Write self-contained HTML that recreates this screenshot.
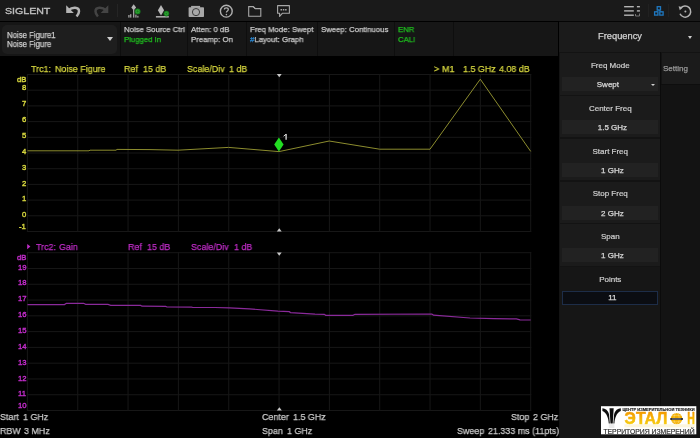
<!DOCTYPE html>
<html><head><meta charset="utf-8">
<style>
*{margin:0;padding:0;box-sizing:border-box}
html,body{width:700px;height:438px;overflow:hidden;background:#000;font-family:"Liberation Sans",sans-serif}
.t{will-change:transform}
.a{position:absolute}
.t{position:absolute;white-space:pre;line-height:1;-webkit-text-stroke:0.25px currentColor}
#tb{left:0;top:0;width:700px;height:21px;background:#1a1a1a}
#info{left:0;top:22px;width:558px;height:34px;background:#161616}
#rp{left:559px;top:21px;width:141px;height:417px;background:#131313}
.vd{position:absolute;top:0;width:1px;height:34px;background:#0e0e0e}
.gy{color:#cccccc}
.gr{color:#1fc21f}
.c{font-size:9.8px;transform:scaleX(0.91);transform-origin:0 0}
.yl{color:#d6d63e}
.mg{color:#c02cc8}
.pn{position:absolute;left:0.5px;width:100.5px;background:#1b1b1b}
.pl{position:absolute;left:0;width:100%;text-align:center;font-size:8px;color:#d0d0d0;line-height:1;-webkit-text-stroke:0.2px currentColor;will-change:transform}
.pv{position:absolute;left:2px;width:95.8px;height:14.2px;background:#222222;text-align:center;font-size:8px;color:#dadada;line-height:15px;padding-left:5px;-webkit-text-stroke:0.25px currentColor;will-change:transform}
</style></head><body>
<div id="chart" class="a" style="left:0;top:56px;width:558px;height:382px;background:#000"></div>
<svg class="a" style="left:0;top:0" width="558" height="438" viewBox="0 0 558 438">
<g stroke="#171717" stroke-width="1"><line x1="27" y1="74.50" x2="531.3" y2="74.50"/><line x1="27" y1="90.20" x2="531.3" y2="90.20"/><line x1="27" y1="105.90" x2="531.3" y2="105.90"/><line x1="27" y1="121.60" x2="531.3" y2="121.60"/><line x1="27" y1="137.30" x2="531.3" y2="137.30"/><line x1="27" y1="153.00" x2="531.3" y2="153.00"/><line x1="27" y1="168.70" x2="531.3" y2="168.70"/><line x1="27" y1="184.40" x2="531.3" y2="184.40"/><line x1="27" y1="200.10" x2="531.3" y2="200.10"/><line x1="27" y1="215.80" x2="531.3" y2="215.80"/><line x1="27" y1="231.50" x2="531.3" y2="231.50"/><line x1="27.40" y1="74.00" x2="27.40" y2="232.00"/><line x1="77.73" y1="74.00" x2="77.73" y2="232.00"/><line x1="128.06" y1="74.00" x2="128.06" y2="232.00"/><line x1="178.39" y1="74.00" x2="178.39" y2="232.00"/><line x1="228.72" y1="74.00" x2="228.72" y2="232.00"/><line x1="279.05" y1="74.00" x2="279.05" y2="232.00"/><line x1="329.38" y1="74.00" x2="329.38" y2="232.00"/><line x1="379.71" y1="74.00" x2="379.71" y2="232.00"/><line x1="430.04" y1="74.00" x2="430.04" y2="232.00"/><line x1="480.37" y1="74.00" x2="480.37" y2="232.00"/><line x1="530.70" y1="74.00" x2="530.70" y2="232.00"/><line x1="27" y1="252.70" x2="531.3" y2="252.70"/><line x1="27" y1="268.48" x2="531.3" y2="268.48"/><line x1="27" y1="284.26" x2="531.3" y2="284.26"/><line x1="27" y1="300.04" x2="531.3" y2="300.04"/><line x1="27" y1="315.82" x2="531.3" y2="315.82"/><line x1="27" y1="331.60" x2="531.3" y2="331.60"/><line x1="27" y1="347.38" x2="531.3" y2="347.38"/><line x1="27" y1="363.16" x2="531.3" y2="363.16"/><line x1="27" y1="378.94" x2="531.3" y2="378.94"/><line x1="27" y1="394.72" x2="531.3" y2="394.72"/><line x1="27" y1="410.50" x2="531.3" y2="410.50"/><line x1="27.40" y1="252.20" x2="27.40" y2="411.00"/><line x1="77.73" y1="252.20" x2="77.73" y2="411.00"/><line x1="128.06" y1="252.20" x2="128.06" y2="411.00"/><line x1="178.39" y1="252.20" x2="178.39" y2="411.00"/><line x1="228.72" y1="252.20" x2="228.72" y2="411.00"/><line x1="279.05" y1="252.20" x2="279.05" y2="411.00"/><line x1="329.38" y1="252.20" x2="329.38" y2="411.00"/><line x1="379.71" y1="252.20" x2="379.71" y2="411.00"/><line x1="430.04" y1="252.20" x2="430.04" y2="411.00"/><line x1="480.37" y1="252.20" x2="480.37" y2="411.00"/><line x1="530.70" y1="252.20" x2="530.70" y2="411.00"/></g>
<polyline points="27.5,150.8 89,150.8 90,150.2 116,150.2 117,149.4 150,149.6 178,150.2 228.5,147.4 279,151.6 329.2,141 379.6,149.2 430,149.2 480.3,79.2 530.7,151.4" fill="none" stroke="#8c8c2e" stroke-width="1"/>
<polyline points="27.5,304.6 64.5,304.6 66.4,303.3 83.6,303.3 85.7,304.3 108,304.4 110.7,305.3 140.7,305.4 142,306.2 165.7,306.4 167,307 191.4,307.1 193,307.5 215,307.5 229.3,307.9 249.3,308.9 277.9,311.1 289.3,311.7 290.5,312.6 315,314.1 324.3,314.3 325.7,315.3 352.9,315.3 355,314.3 431.9,314 433.5,315.2 470,318 494,318.6 516.4,318.9 520,319.9 530.7,320" fill="none" stroke="#8a2a9a" stroke-width="1.2"/>
<polygon points="278.9,137.5 283.6,144.5 278.9,151.5 274.2,144.5" fill="#22dd22"/>
</svg>
<div class="t yl" style="right:673.5px;top:75.58px;font-size:7.7px;-webkit-text-stroke:0.4px currentColor">dB</div>
<div class="t yl" style="right:673.7px;top:84.38px;font-size:7.7px;-webkit-text-stroke:0.4px currentColor">8</div>
<div class="t yl" style="right:673.7px;top:100.28px;font-size:7.7px;-webkit-text-stroke:0.4px currentColor">7</div>
<div class="t yl" style="right:673.7px;top:116.18px;font-size:7.7px;-webkit-text-stroke:0.4px currentColor">6</div>
<div class="t yl" style="right:673.7px;top:131.98px;font-size:7.7px;-webkit-text-stroke:0.4px currentColor">5</div>
<div class="t yl" style="right:673.7px;top:147.88px;font-size:7.7px;-webkit-text-stroke:0.4px currentColor">4</div>
<div class="t yl" style="right:673.7px;top:163.78px;font-size:7.7px;-webkit-text-stroke:0.4px currentColor">3</div>
<div class="t yl" style="right:673.7px;top:179.68px;font-size:7.7px;-webkit-text-stroke:0.4px currentColor">2</div>
<div class="t yl" style="right:673.7px;top:195.48px;font-size:7.7px;-webkit-text-stroke:0.4px currentColor">1</div>
<div class="t yl" style="right:673.7px;top:211.38px;font-size:7.7px;-webkit-text-stroke:0.4px currentColor">0</div>
<div class="t yl" style="right:673.7px;top:223.38px;font-size:7.7px;-webkit-text-stroke:0.4px currentColor">-1</div>
<div class="t mg" style="right:673.5px;top:254.48px;font-size:7.7px;-webkit-text-stroke:0.4px currentColor">dB</div>
<div class="t mg" style="right:673.7px;top:263.58px;font-size:7.7px;-webkit-text-stroke:0.4px currentColor">19</div>
<div class="t mg" style="right:673.7px;top:279.38px;font-size:7.7px;-webkit-text-stroke:0.4px currentColor">18</div>
<div class="t mg" style="right:673.7px;top:295.28px;font-size:7.7px;-webkit-text-stroke:0.4px currentColor">17</div>
<div class="t mg" style="right:673.7px;top:311.18px;font-size:7.7px;-webkit-text-stroke:0.4px currentColor">16</div>
<div class="t mg" style="right:673.7px;top:326.98px;font-size:7.7px;-webkit-text-stroke:0.4px currentColor">15</div>
<div class="t mg" style="right:673.7px;top:342.88px;font-size:7.7px;-webkit-text-stroke:0.4px currentColor">14</div>
<div class="t mg" style="right:673.7px;top:358.68px;font-size:7.7px;-webkit-text-stroke:0.4px currentColor">13</div>
<div class="t mg" style="right:673.7px;top:374.58px;font-size:7.7px;-webkit-text-stroke:0.4px currentColor">12</div>
<div class="t mg" style="right:673.7px;top:390.38px;font-size:7.7px;-webkit-text-stroke:0.4px currentColor">11</div>
<div class="t mg" style="right:673.7px;top:401.88px;font-size:7.7px;-webkit-text-stroke:0.4px currentColor">10</div>
<div class="t yl c" style="left:31.3px;top:63.5px">Trc1:</div>
<div class="t yl c" style="left:55px;top:63.5px">Noise Figure</div>
<div class="t yl c" style="left:123.6px;top:63.5px">Ref</div>
<div class="t yl c" style="left:142.5px;top:63.5px">15 dB</div>
<div class="t yl c" style="left:186.5px;top:63.5px">Scale/Div</div>
<div class="t yl c" style="left:229px;top:63.5px">1 dB</div>
<div class="t yl c" style="left:434.1px;top:63.5px">&gt;</div>
<div class="t yl c" style="left:442px;top:63.5px">M1</div>
<div class="t yl c" style="left:462.6px;top:63.5px">1.5 GHz</div>
<div class="t yl c" style="left:499.3px;top:63.5px">4.08 dB</div>
<svg class="a" style="left:0;top:0" width="300" height="150"><path d="M286.1,134 L286.1,139.7" stroke="#dcdcdc" stroke-width="1.3"/><path d="M286.1,134.2 L283.6,136.2" stroke="#dcdcdc" stroke-width="1"/></svg>
<svg class="a" style="left:0;top:0" width="40" height="260"><polygon points="27.2,243.9 30.4,246.6 27.2,249.3" fill="#c02cc8"/></svg>
<div class="t mg c" style="left:35.6px;top:242.0px">Trc2:</div>
<div class="t mg c" style="left:58.5px;top:242.0px">Gain</div>
<div class="t mg c" style="left:128.2px;top:242.0px">Ref</div>
<div class="t mg c" style="left:147.2px;top:242.0px">15 dB</div>
<div class="t mg c" style="left:191px;top:242.0px">Scale/Div</div>
<div class="t mg c" style="left:233.5px;top:242.0px">1 dB</div>
<svg class="a" style="left:0;top:0" width="558" height="438">
<polygon points="276.8,74 281.7,74 279.25,77.2" fill="#c8c8c8"/>
<polygon points="276.8,231.5 281.7,231.5 279.25,228.3" fill="#c8c8c8"/>
<polygon points="276.8,252.5 281.7,252.5 279.25,255.7" fill="#c8c8c8"/>
<polygon points="276.9,410.5 281.8,410.5 279.35,407.2" fill="#c8c8c8"/>
</svg>
<div class="t gy c" style="left:-0.3px;top:412.3px">Start</div>
<div class="t gy c" style="left:22.5px;top:412.3px">1 GHz</div>
<div class="t gy c" style="left:-0.3px;top:425.8px">RBW</div>
<div class="t gy c" style="left:24px;top:425.8px">3 MHz</div>
<div class="t gy c" style="left:261.7px;top:412.3px">Center</div>
<div class="t gy c" style="left:293.2px;top:412.3px">1.5 GHz</div>
<div class="t gy c" style="left:261.7px;top:425.8px">Span</div>
<div class="t gy c" style="left:286.5px;top:425.8px">1 GHz</div>
<div class="t gy c" style="left:510.6px;top:412.3px">Stop</div>
<div class="t gy c" style="left:533px;top:412.3px">2 GHz</div>
<div class="t gy c" style="left:456.9px;top:425.8px">Sweep</div>
<div class="t gy c" style="left:488px;top:425.8px">21.333 ms (11pts)</div>
<!-- toolbar -->
<div id="tb" class="a">
  <div class="t" style="left:4.6px;top:6.7px;font-size:9.3px;color:#c0c0c0;-webkit-text-stroke:0.35px #c0c0c0;transform:scaleX(1.14);transform-origin:0 0">SIGLENT</div>
<svg class="a" style="left:0;top:0" width="700" height="21" viewBox="0 0 700 21">
<g fill="#b4b4b4">
<polygon points="66.2,5.2 66.2,13 73.8,13"/>
</g>
<path d="M68.6,10.2 C72,6.8 79,6.5 79,11.2 C79,13.2 78,15 76.6,16.5" fill="none" stroke="#b4b4b4" stroke-width="2.5"/>
<polygon points="108.3,5.2 108.3,13 100.7,13" fill="#444"/>
<path d="M105.9,10.2 C102.5,6.8 95.5,6.5 95.5,11.2 C95.5,13.2 96.5,15 97.9,16.5" fill="none" stroke="#444" stroke-width="2.5"/>
<rect x="117" y="4" width="1" height="13" fill="#252525"/>
<!-- icon1 -->
<polygon points="133.7,4.2 136.1,7.4 133.7,10.6 131.3,7.4" fill="#b4b4b4"/>
<rect x="133.1" y="10" width="1.2" height="7.6" fill="#b0b0b0"/>
<rect x="128.2" y="15" width="1.4" height="2.6" fill="#9a9a9a"/>
<rect x="130" y="14.2" width="1.4" height="3.4" fill="#9a9a9a"/>
<rect x="135.2" y="14.6" width="1.4" height="3" fill="#9a9a9a"/>
<rect x="137.2" y="15.8" width="1.3" height="1.8" fill="#9a9a9a"/>
<circle cx="137.6" cy="11.4" r="2.9" fill="#177f1f"/>
<circle cx="137.6" cy="11.4" r="1.5" fill="none" stroke="#3db43d" stroke-width="0.7"/>
<!-- icon2 -->
<polygon points="161,5.1 164.1,10.3 161,15.5 157.9,10.3" fill="#b8b8b8"/>
<rect x="155.9" y="16" width="12.9" height="1.6" fill="#a8a8a8"/>
<circle cx="166.4" cy="13.6" r="2.8" fill="#177f1f"/>
<circle cx="166.4" cy="13.6" r="1.3" fill="none" stroke="#3db43d" stroke-width="0.7"/>
<!-- camera -->
<rect x="188.6" y="7.3" width="15.4" height="9.8" rx="0.8" fill="#a8a8a8"/>
<rect x="191.1" y="5.9" width="9" height="2" fill="#a8a8a8"/>
<circle cx="196" cy="12.1" r="3.6" fill="none" stroke="#3a3a3a" stroke-width="1"/>
<!-- help -->
<circle cx="226.3" cy="11.2" r="5.9" fill="none" stroke="#b0b0b0" stroke-width="1.4"/>
<path d="M224.4,9.6 C224.4,7.4 228.3,7.4 228.3,9.6 C228.3,11 226.4,11 226.4,12.6" fill="none" stroke="#b0b0b0" stroke-width="1.3"/>
<circle cx="226.4" cy="14.6" r="0.8" fill="#b0b0b0"/>
<!-- folder -->
<path d="M248.7,6.6 L253.2,6.6 L255.3,8.6 L260.8,8.6 L260.8,16.2 L248.7,16.2 Z" fill="none" stroke="#a8a8a8" stroke-width="1.1"/>
<path d="M253.2,6.6 L255.3,8.6" fill="none" stroke="#a8a8a8" stroke-width="1.1"/>
<!-- chat -->
<path d="M277.6,5.6 L289.4,5.6 L289.4,13.3 L282.3,13.3 L279.6,16.4 L279.6,13.3 L277.6,13.3 Z" fill="none" stroke="#a8a8a8" stroke-width="1.1" stroke-linejoin="round"/>
<rect x="280.5" y="9" width="1.5" height="1.5" fill="#a8a8a8"/>
<rect x="282.8" y="9" width="1.5" height="1.5" fill="#a8a8a8"/>
<rect x="285.1" y="9" width="1.5" height="1.5" fill="#a8a8a8"/>
<!-- list icon -->
<rect x="624.1" y="6" width="9.7" height="1.4" fill="#b4b4b4"/>
<rect x="624.1" y="10.2" width="9.7" height="1.4" fill="#b4b4b4"/>
<rect x="624.1" y="14.5" width="9.7" height="1.4" fill="#b4b4b4"/>
<rect x="636.9" y="6" width="3" height="1.4" fill="#b4b4b4"/>
<rect x="636.9" y="10.2" width="3" height="1.4" fill="#b4b4b4"/>
<path d="M635.5,14 L635.5,16 L639.5,16 L639.5,13.5" fill="none" stroke="#8a8a8a" stroke-width="0.8"/>
<rect x="648" y="4" width="1" height="13" fill="#212121"/>
<!-- network icon -->
<g fill="none" stroke="#1f78c0" stroke-width="1.3">
<rect x="657.2" y="6.7" width="3.3" height="3.3"/>
<rect x="654.6" y="11.8" width="3.3" height="3.3"/>
<rect x="659.8" y="11.8" width="3.3" height="3.3"/>
</g>
<path d="M658.8,10 L656.3,11.8 M658.8,10 L661.4,11.8" stroke="#1f78c0" stroke-width="0.8"/>
<rect x="668" y="4" width="1" height="13" fill="#212121"/>
<!-- reset icon -->
<path d="M680.6,8.2 A5.6,5.6 0 1 1 680,13.8" fill="none" stroke="#b4b4b4" stroke-width="1.5"/>
<polygon points="678.6,6.2 682.8,7.2 679.8,10.2" fill="#b4b4b4"/>
<circle cx="685.4" cy="11.5" r="1" fill="#b4b4b4"/>
</svg>
</div>
<!-- info row -->
<div id="info" class="a">
  <div class="a" style="left:2px;top:3px;width:114.5px;height:29px;background:#1e1e1e;border-radius:5px"></div>
  <div class="t" style="left:6.6px;top:8.6px;font-size:8.3px;color:#d0d0d0;transform:scaleX(0.94);transform-origin:0 0">Noise Figure1</div>
  <div class="t" style="left:6.6px;top:17.9px;font-size:8.3px;color:#d0d0d0;transform:scaleX(0.94);transform-origin:0 0">Noise Figure</div>
  <div class="a" style="left:106.6px;top:15.3px;width:0;height:0;border-left:3.5px solid transparent;border-right:3.5px solid transparent;border-top:4px solid #cccccc"></div>
  <div class="vd" style="left:120px"></div>
  <div class="t gy" style="left:124px;top:3.5px;font-size:8px;transform:scaleX(0.97);transform-origin:0 0">Noise Source Ctrl</div>
  <div class="t gr" style="left:124px;top:13.5px;font-size:8px;transform:scaleX(0.97);transform-origin:0 0">Plugged In</div>
  <div class="vd" style="left:187px"></div>
  <div class="t gy" style="left:191px;top:3.5px;font-size:8px;transform:scaleX(0.97);transform-origin:0 0">Atten: 0 dB</div>
  <div class="t gy" style="left:191px;top:13.5px;font-size:8px;transform:scaleX(0.97);transform-origin:0 0">Preamp: On</div>
  <div class="vd" style="left:246.3px"></div>
  <div class="t gy" style="left:250px;top:3.5px;font-size:8px;transform:scaleX(0.97);transform-origin:0 0">Freq Mode: Swept</div>
  <div class="t gy" style="left:250px;top:13.5px;font-size:8px;transform:scaleX(0.97);transform-origin:0 0"><span style="color:#2a8ad8">#</span>Layout: Graph</div>
  <div class="vd" style="left:317px"></div>
  <div class="t gy" style="left:320.5px;top:3.5px;font-size:8px;transform:scaleX(0.97);transform-origin:0 0">Sweep: Continuous</div>
  <div class="vd" style="left:394px"></div>
  <div class="t gr" style="left:398px;top:3.5px;font-size:8px;transform:scaleX(0.97);transform-origin:0 0">ENR</div>
  <div class="t gr" style="left:398px;top:13.5px;font-size:8px;transform:scaleX(0.97);transform-origin:0 0">CALI</div>
  <div class="vd" style="left:452.5px"></div>
</div>
<!-- right panel -->
<div id="rp" class="a">
  <div class="a" style="left:0;top:0;width:141px;height:1px;background:#050505"></div>
  <div class="a" style="left:0;top:1px;width:141px;height:29.8px;background:#1b1b1b"></div>
  <div class="t" style="left:-1px;top:10.5px;width:124px;text-align:center;font-size:9.3px;color:#d2d2d2">Frequency</div>
  <div class="a" style="left:129px;top:14.5px;width:0;height:0;border-left:2.7px solid transparent;border-right:2.7px solid transparent;border-top:3px solid #cfcfcf"></div>
  <div class="a" style="left:102.5px;top:32px;width:38.5px;height:31px;background:#1b1b1b"></div>
  <div class="a" style="left:101px;top:31px;width:1.4px;height:386px;background:#0b0b0b"></div>
  <div class="a" style="left:102.4px;top:63px;width:38.6px;height:1px;background:#0e0e0e"></div>
  <div class="t" style="left:104px;top:44px;font-size:8px;color:#9a9a9a">Setting</div>
  <div class="pn" style="top:32.30px;height:41.30px">
    <div class="pl" style="top:8.9px">Freq Mode</div>
    <div class="pv" style="top:24px;padding-left:0;padding-right:4px">Swept</div>
    <div class="a" style="left:91px;top:30.5px;width:0;height:0;border-left:2.4px solid transparent;border-right:2.4px solid transparent;border-top:2.6px solid #cfcfcf"></div>
  </div>
  <div class="pn" style="top:75.05px;height:41.30px">
    <div class="pl" style="top:8.9px">Center Freq</div>
    <div class="pv" style="top:24px">1.5 GHz</div>
  </div>
  <div class="pn" style="top:117.80px;height:41.30px">
    <div class="pl" style="top:8.9px">Start Freq</div>
    <div class="pv" style="top:24px">1 GHz</div>
  </div>
  <div class="pn" style="top:160.55px;height:41.30px">
    <div class="pl" style="top:8.9px">Stop Freq</div>
    <div class="pv" style="top:24px">2 GHz</div>
  </div>
  <div class="pn" style="top:203.30px;height:41.30px">
    <div class="pl" style="top:8.9px">Span</div>
    <div class="pv" style="top:24px">1 GHz</div>
  </div>
  <div class="pn" style="top:246.05px;height:172px;background:#161616">
    <div class="pl" style="top:8.9px">Points</div>
    <div class="pv" style="top:24px;background:#0b0d12;border:1px solid #1d2d48;line-height:12.5px">11</div>
  </div>
</div>
<svg class="a" style="left:0;top:0" width="700" height="438" viewBox="0 0 700 438">
<defs>
<linearGradient id="eg" x1="0" y1="412" x2="0" y2="424" gradientUnits="userSpaceOnUse">
<stop offset="0" stop-color="#f39a00"/><stop offset="1" stop-color="#f7cc10"/>
</linearGradient>
<linearGradient id="rg" x1="0" y1="424" x2="0" y2="429" gradientUnits="userSpaceOnUse">
<stop offset="0" stop-color="#f8e070"/><stop offset="1" stop-color="#ffffff"/>
</linearGradient>
</defs>
<rect x="601" y="406.2" width="95.3" height="28.1" fill="#ffffff"/>
<path d="M602.4,408.2 C605.2,408.3 608.2,410.3 609.1,414.5 L609.8,423.6 L608.8,423.6 C608.4,418 606.8,412.6 602.4,410.9 Z" fill="#0d0d0d"/>
<path d="M620.8,408.2 C618,408.3 615,410.3 614.1,414.5 L613.4,423.6 L614.4,423.6 C614.8,418 616.4,412.6 620.8,410.9 Z" fill="#0d0d0d"/>
<path d="M609.5,408.2 L613.7,408.2 L612.7,423.6 L610.5,423.6 Z" fill="#0d0d0d"/>
<rect x="608.8" y="424" width="5.6" height="4" fill="#d8d8d8" opacity="0.5"/>
<text x="622.4" y="410.9" font-family="Liberation Sans" font-weight="bold" font-size="4.2" textLength="72.2" lengthAdjust="spacingAndGlyphs" fill="#1a1a1a" stroke="#1a1a1a" stroke-width="0.15">ЦЕНТР ИЗМЕРИТЕЛЬНОЙ ТЕХНИКИ</text>
<text x="624.6" y="423.8" font-family="Liberation Sans" font-weight="bold" font-size="16.4" textLength="42.8" lengthAdjust="spacingAndGlyphs" fill="url(#eg)" stroke="url(#eg)" stroke-width="0.5">ЭТАЛ</text>
<text x="687.2" y="423.8" font-family="Liberation Sans" font-weight="bold" font-size="16.4" textLength="7.6" lengthAdjust="spacingAndGlyphs" fill="url(#eg)" stroke="url(#eg)" stroke-width="0.5">Н</text>
<circle cx="676.6" cy="418.6" r="5.7" fill="#f4b000"/>
<g stroke="#fff" stroke-width="0.4" fill="none" opacity="0.7">
<ellipse cx="676.6" cy="418.6" rx="2.6" ry="5.7"/>
<line x1="671" y1="415.6" x2="682.2" y2="415.6"/>
<line x1="671" y1="421.8" x2="682.2" y2="421.8"/>
</g>
<rect x="670.3" y="418" width="12.6" height="2" fill="#333"/>
<rect x="672" y="418.6" width="9" height="0.8" fill="#999"/>
<rect x="624.4" y="424.3" width="70.4" height="3" fill="#fbeebb" opacity="0.5"/>
<text x="603.4" y="434" font-family="Liberation Sans" font-size="7.1" textLength="91.2" lengthAdjust="spacingAndGlyphs" fill="#333" stroke="#333" stroke-width="0.2">ТЕРРИТОРИЯ ИЗМЕРЕНИЙ</text>
</svg>
</body></html>
